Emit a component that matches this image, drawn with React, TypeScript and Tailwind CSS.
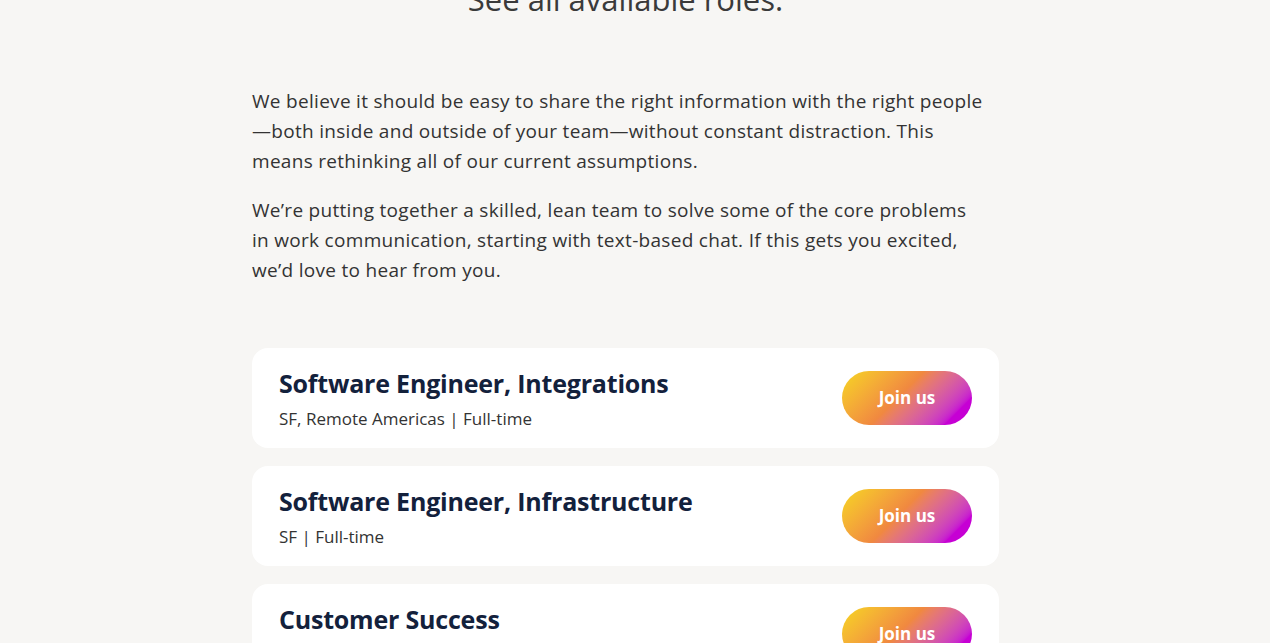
const roles = [
  { title: "Software Engineer, Integrations", meta: "SF, Remote Americas | Full-time" },
  { title: "Software Engineer, Infrastructure", meta: "SF | Full-time" },
  { title: "Customer Success", meta: "SF | Full-time" },
];

const RoleCard = ({ title, meta }: { title: string; meta: string }) => (
  <div className="flex h-[100px] items-center justify-between rounded-2xl bg-white px-[27px]">
    <div>
      <h3 className="text-[25px] font-bold leading-[32px] tracking-[-0.2px] text-[#13213c]">{title}</h3>
      <p className="mt-[9px] text-[17px] leading-[22px] text-[#333]">{meta}</p>
    </div>
    <button className="h-[54px] w-[130px] rounded-full bg-linear-135 from-[#f5d61c] via-[#f08840] via-45% to-[#c600d4] to-85% text-[17px] font-bold text-white">
      Join us
    </button>
  </div>
);

export default function App() {
  return (
    <div className="min-h-screen bg-[#f7f6f4] font-['Open_Sans',sans-serif]">
      <div className="flex justify-center pr-[19px]">
        <div className="w-[747px] pb-10">
          <h2 className="-mt-[21px] text-center text-[31px] leading-[40px] text-[#3a3a3a]">
            See all available roles.
          </h2>
          <div className="mt-[67px] space-y-[19px] text-[19px] leading-[30px] tracking-[0.3px] text-[#333]">
            <p>
              We believe it should be easy to share the right information with the right people
              <br />
              —both inside and outside of your team—without constant distraction. This
              <br />
              means rethinking all of our current assumptions.
            </p>
            <p>
              We’re putting together a skilled, lean team to solve some of the core problems
              <br />
              in work communication, starting with text-based chat. If this gets you excited,
              <br />
              we’d love to hear from you.
            </p>
          </div>
          <div className="mt-[63px] space-y-[18px]">
            {roles.map((r) => (
              <RoleCard key={r.title} {...r} />
            ))}
          </div>
        </div>
      </div>
    </div>
  );
}
